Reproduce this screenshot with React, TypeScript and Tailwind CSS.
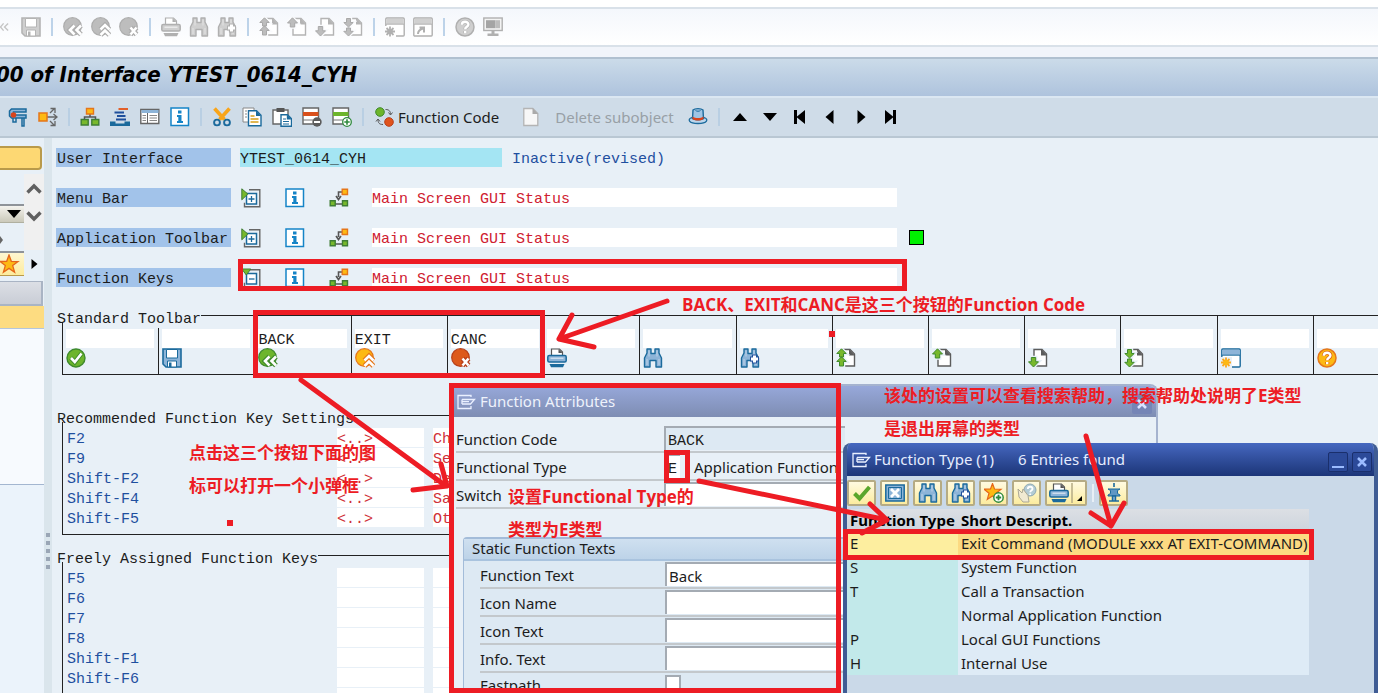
import type { ReactNode } from "react";

const ui = "font-['Noto_Sans','Noto_Sans_CJK_SC',sans-serif]";
const mono = "font-['Liberation_Mono','Noto_Sans_CJK_SC',monospace]";

type IconProps = { gray?: boolean; className?: string };

function Svg({ children, className = "" }: { children: ReactNode; className?: string }) {
  return (
    <svg viewBox="0 0 20 20" className={`size-5 shrink-0 ${className}`} fill="none" aria-hidden="true">
      {children}
    </svg>
  );
}

function SaveIcon({ gray }: IconProps) {
  const s = gray ? "#b4b4b4" : "#1b6a9c";
  const f = gray ? "#cfcfcf" : "#8db4d8";
  return (
    <Svg>
      <path d="M1 1h18v18H4l-3-3z" fill={f} stroke={s} strokeWidth="1.6" />
      <path d="M4.500 1.500h11v8.500h-11z" fill="#fff" stroke={s} />
      <path d="M5.500 13h9v6h-9z" fill="#fff" stroke={s} />
      <path d="M7 14.500h2.500V19H7z" fill={s} />
    </Svg>
  );
}

function RoundIcon({ gray, kind }: IconProps & { kind: "back" | "exit" | "cancel" }) {
  const colors = { back: ["#6db52c", "#3f8a2c"], exit: ["#fdb913", "#e5761a"], cancel: ["#dd5a1c", "#b8401a"] }[kind];
  const f = gray ? "#bdbdbd" : colors[0];
  const s = gray ? "#adadad" : colors[1];
  const d = {
    back: "M11.500 8.500 7 13l4.500 4.500M18 8.500 13.500 13l4.500 4.500",
    exit: "M9.500 12.500l4.500-4.500 4.500 4.500M9.500 18l4.500-4.500 4.500 4.500",
    cancel: "M11.500 10.500l6 7M17.500 10.500l-6 7",
  }[kind];
  return (
    <Svg>
      <circle cx="9.500" cy="9.500" r="8.800" fill={f} stroke={s} strokeWidth="1.200" />
      <path d={d} stroke={s} strokeWidth="5" />
      <path d={d} stroke="#fff" strokeWidth="2.600" />
    </Svg>
  );
}

function PrintIcon({ gray }: IconProps) {
  const s = gray ? "#b0b0b0" : "#1b6a9c";
  const f = gray ? "#cfcfcf" : "#8db4d8";
  return (
    <Svg>
      <path d="M4.500 8V1h8l3 3v4" fill="#fff" stroke={gray ? s : "#555"} strokeWidth="1.200" />
      <path d="M11.500 1v4h4z" fill={gray ? s : "#555"} />
      <rect x=".8" y="7.500" width="18.400" height="6.500" rx="1.500" fill={f} stroke={s} strokeWidth="1.500" />
      <path d="M3.500 10.200h13" stroke="#fff" strokeOpacity=".8" />
      <path d="M2.500 16h15l-1.500 3.200H4z" fill={s} />
    </Svg>
  );
}

function FindIcon({ gray, plus }: IconProps & { plus?: boolean }) {
  const s = gray ? "#b0b0b0" : "#1b6a9c";
  const f = gray ? "#cfcfcf" : "#8db4d8";
  return (
    <Svg>
      <path
        d="M4 1h4v4.500h4V1h4v4l2.500 5v9h-5.500v-6.500H7V19H1.500v-9L4 5z"
        fill={f}
        stroke={s}
        strokeWidth="1.400"
        strokeLinejoin="round"
      />
      <path d="M6 2.500v6M14 2.500v6M4 11v6M16 11v6" stroke="#fff" strokeOpacity=".45" />
      {plus && (
        <>
          <path d="M14.500 6.500v9M10 11h9" stroke={gray ? s : "#23509c"} strokeWidth="5.200" />
          <path d="M14.500 7.500v7M11 11h7" stroke="#fff" strokeWidth="3" />
        </>
      )}
    </Svg>
  );
}

function PageIcon({ gray, kind }: IconProps & { kind: "first" | "up" | "down" | "last" }) {
  const page = gray ? "#b4b4b4" : "#5c5c5c";
  const f = gray ? "#bdbdbd" : "#78b82c";
  const s = gray ? "#a9a9a9" : "#3f8a2c";
  const d = {
    first: "M5.500.8l4.700 4.700H7.500V9h-4V5.500H.8zM5.500 8.800l4.700 4.700H7.500V18h-4v-4.500H.8z",
    up: "M5.500.8l5 5.200H7.700v4H3.300V6H.5z",
    down: "M5.500 19l5-5.200H7.700V9.500H3.300v4.300H.5z",
    last: "M5.500 10l4.700-4.500H7.500V1.500h-4v4H.8zM5.500 19l4.700-4.700H7.500V11h-4v3.300H.8z",
  }[kind];
  return (
    <Svg>
      <path d="M6 1.500h8l4.500 4.500v12H6z" fill="#fff" stroke={page} strokeWidth="1.400" />
      <path d="M13 1v6.500h6z" fill={page} />
      <path d={d} stroke={gray ? "#fafbfd" : "#e8f0f7"} strokeWidth="3.400" />
      <path d={d} fill={f} stroke={s} />
    </Svg>
  );
}

function WindowIcon({ gray, shortcut }: IconProps & { shortcut?: boolean }) {
  const s = gray ? "#b0b0b0" : "#1b6a9c";
  return (
    <Svg>
      <rect x=".8" y="1" width="18.400" height="18" rx="1" fill="#fff" stroke={s} strokeWidth="1.400" />
      <path d="M1.500 1.700h17V7h-17z" fill={gray ? "#d0d0d0" : "#8db4d8"} />
      <path d="M1 7.200h18" stroke={s} />
      {shortcut ? (
        <path d="M5 17c0-3 1.500-4.500 5-5.500M6.500 10.500h4.500v5" stroke={s} strokeWidth="2" />
      ) : (
        <>
          <path d="M0 9h11v11H0z" fill={gray ? "#fff" : "#e8f0f7"} />
          <path
            d="M5 9.500v10M0 14.500h10M1.500 11l7 7M8.500 11l-7 7"
            stroke={gray ? "#b0b0b0" : "#fba81a"}
            strokeWidth="1.800"
          />
          <circle cx="5" cy="14.500" r="2.600" fill={gray ? "#b0b0b0" : "#fdb913"} />
        </>
      )}
    </Svg>
  );
}

function HelpIcon({ gray }: IconProps) {
  return (
    <Svg>
      <circle cx="10" cy="10" r="9" fill={gray ? "#cfcfcf" : "#fdb913"} stroke={gray ? "#b0b0b0" : "#e5761a"} strokeWidth="1.500" />
      <path
        d="M6.800 7.800c0-4 6.600-4 6.600-.3 0 2.300-3.200 2.300-3.200 4.700M10.200 14v2.300"
        stroke={gray ? "#b8b8b8" : "#d9661a"}
        strokeWidth="4"
      />
      <path d="M6.800 7.800c0-4 6.600-4 6.600-.3 0 2.300-3.200 2.300-3.200 4.700M10.200 14v2.300" stroke="#fff" strokeWidth="2.400" />
    </Svg>
  );
}

function MonitorIcon() {
  return (
    <Svg>
      <rect x=".8" y="1" width="18.400" height="12.500" fill="#f3f3f3" stroke="#b0b0b0" strokeWidth="1.400" />
      <path d="M3 3.200h9.500v8H3z" fill="#a4a4a4" />
      <path d="M12.500 3.200H17v8h-4.500z" fill="#bcbcbc" />
      <path d="M8.500 14h3v2.500h4V19h-11v-2.500h4z" fill="#b0b0b0" />
    </Svg>
  );
}

function CheckIcon() {
  return (
    <Svg>
      <circle cx="10" cy="10" r="9" fill="#6db52c" stroke="#3f8a2c" strokeWidth="1.400" />
      <path d="M4.800 10l4 4.200L15.500 5.500" stroke="#3f8a2c" strokeWidth="4.400" />
      <path d="M5 10l3.800 4L15.500 5.500" stroke="#fff" strokeWidth="2.600" />
    </Svg>
  );
}

function InfoIcon() {
  return (
    <Svg>
      <rect x="1" y="1" width="17.500" height="17.500" fill="#fff" stroke="#1584c7" strokeWidth="1.500" />
      <path d="M8 3.500h3.500v3H8zM7 8h4.500v6H13v2H7v-2h1.300v-4H7z" fill="#1584c7" />
    </Svg>
  );
}

function StatusFlowIcon() {
  return (
    <Svg>
      <path d="M13 4H9.500v5M7 8l2.500 3.500L12 8M6 16h8" stroke="#555" strokeWidth="1.600" />
      <path d="M13.200 1.200h5.300v5.300h-5.300z" fill="#fdb913" stroke="#e5761a" strokeWidth="1.400" />
      <path d="M1.200 12.700h5v5h-5zM13.500 12.700h5v5h-5z" fill="#78b82c" stroke="#3f7d35" strokeWidth="1.400" />
    </Svg>
  );
}

function ExpandIcon({ open }: { open?: boolean }) {
  return (
    <Svg>
      <path d="M8 1.700h10.800v17H3.500v-4" stroke="#666" strokeWidth="1.400" />
      <path d="M5.500 5.500h10v10.500h-10z" fill="#fff" stroke="#1b6a9c" strokeWidth="1.500" />
      <path d={open ? "M8 11h5.500" : "M7.500 11h6M10.500 8v6"} stroke="#1b6a9c" strokeWidth="1.300" />
      <path d={open ? "M.8 1h9l-4.500 6z" : "M.8.800v11L6.800 6z"} fill="#78b82c" stroke="#3f7d35" />
    </Svg>
  );
}

function StarIcon() {
  return (
    <Svg>
      <path d="M9 1l2.300 6.300 6.700.2-5.300 4.100 1.900 6.600L9 14.400l-5.600 3.800 1.900-6.600L0 7.500l6.700-.2z" fill="#fdb913" stroke="#e5661a" strokeWidth="1.300" />
    </Svg>
  );
}

function TriangleIcon({ d }: { d: string }) {
  return (
    <Svg>
      <path d={d} fill="#000" />
    </Svg>
  );
}

function WindowMark() {
  return (
    <svg viewBox="0 0 20 16" className="h-4 w-5 shrink-0" fill="none" stroke="#eaf0ff" strokeWidth="1.300" aria-hidden="true">
      <path d="M15 3V1.500H2v13h13V12" />
      <path d="M6 5.500h12.500L14.500 10H6M6 7.700h7" />
      <path d="M6 5.500V10" />
    </svg>
  );
}

function IconButton({ label, children, className = "" }: { label: string; children: ReactNode; className?: string }) {
  return (
    <button type="button" aria-label={label} className={`flex shrink-0 items-center justify-center ${className}`}>
      {children}
    </button>
  );
}

function MenuToolbar() {
  const groups: [string, ReactNode][][] = [
    [["Save", <SaveIcon gray />]],
    [
      ["Back", <RoundIcon gray kind="back" />],
      ["Exit", <RoundIcon gray kind="exit" />],
      ["Cancel", <RoundIcon gray kind="cancel" />],
    ],
    [
      ["Print", <PrintIcon gray />],
      ["Find", <FindIcon gray />],
      ["Find next", <FindIcon gray plus />],
    ],
    [
      ["First page", <PageIcon gray kind="first" />],
      ["Previous page", <PageIcon gray kind="up" />],
      ["Next page", <PageIcon gray kind="down" />],
      ["Last page", <PageIcon gray kind="last" />],
    ],
    [
      ["New session", <WindowIcon gray />],
      ["Create shortcut", <WindowIcon gray shortcut />],
    ],
    [
      ["Help", <HelpIcon gray />],
      ["Customize layout", <MonitorIcon />],
    ],
  ];
  return (
    <div className="mt-[7px] flex h-10 shrink-0 items-center border-y-2 border-[#d9e1e9] bg-linear-to-b from-[#f4f7fc] to-white">
      <svg viewBox="0 0 10 12" className="mr-3 h-3 w-[9px]" fill="none" stroke="#c4c4c4" strokeWidth="1.500" aria-hidden="true">
        <path d="M4 2 .5 6 4 10M9 2 5 6l4 4" />
      </svg>
      {groups.map((group, i) => (
        <div key={i} className="flex items-center">
          {i > 0 && <span className="mx-[10px] h-[18px] w-[2px] bg-[#bdd3e9]" />}
          <div className="flex gap-2">
            {group.map(([label, icon]) => (
              <IconButton key={label} label={label}>
                {icon}
              </IconButton>
            ))}
          </div>
        </div>
      ))}
    </div>
  );
}

function ToolSep() {
  return <span className="h-[18px] w-[2px] shrink-0 bg-[#b9cfe3]" />;
}

function AppToolbar() {
  return (
    <div className={`flex h-[42px] shrink-0 items-center gap-[10px] border-t-2 border-b-2 border-t-[#dbe7f2] border-b-[#b9c7d3] bg-[#cfdce8] pl-2 text-[15px] ${ui}`}>
      <IconButton label="Display or change">
        <Svg>
          <path d="M3.500 2H18v3H5.500v3H18v3H3.500L1.500 9V4z" fill="#8db4d8" stroke="#1b6a9c" strokeWidth="1.500" />
          <path d="M5 11v4h3v-4M14 11v8h2v-8" stroke="#1b6a9c" strokeWidth="1.500" />
          <circle cx="5.500" cy="8" r="2.800" fill="#d8431c" />
        </Svg>
      </IconButton>
      <IconButton label="Other object">
        <Svg>
          <path d="M8 10h10M12 6l4-4M12 14l4 4M15.500 7l3.500 3-3.500 3M12.500 1.500H17V6M12.500 18.500H17V14" stroke="#666" strokeWidth="1.300" />
          <path d="M1 6h8v8H1z" fill="#fdb913" stroke="#e5761a" strokeWidth="1.500" />
        </Svg>
      </IconButton>
      <ToolSep />
      <IconButton label="Hierarchy">
        <Svg>
          <path d="M10 7v3M4.500 13v-3h11v3" stroke="#555" strokeWidth="1.500" />
          <path d="M6.500 1.500h7V7h-7z" fill="#fdb913" stroke="#e5761a" strokeWidth="1.400" />
          <path d="M1.200 12.500h7v5.500h-7zM11.800 12.500h7v5.500h-7z" fill="#78b82c" stroke="#3f7d35" strokeWidth="1.400" />
        </Svg>
      </IconButton>
      <IconButton label="Object list">
        <Svg>
          <path d="M8.500 2h9.500" stroke="#e2602a" strokeWidth="2" />
          <path d="M4.500 5.500h9.500M7 9h8.500M6 12.500h10" stroke="#1f4f9c" strokeWidth="2" />
          <path d="M0 14.500h5.500v2h9v-2H20V19H0z" fill="#1b6a9c" />
        </Svg>
      </IconButton>
      <IconButton label="Detail">
        <Svg>
          <path d="M.8 2.500h18v14H.8z" fill="#fff" stroke="#666" strokeWidth="1.400" />
          <path d="M1.500 3h17v3h-17z" fill="#8db4d8" />
          <path d="M7.500 6v10" stroke="#666" />
          <path d="M2.500 8.500h3.500M2.500 11h3.500M2.500 13.500h3.500M9.500 8.500H17M9.500 11H17M9.500 13.500H17" stroke="#888" strokeWidth="1.200" />
        </Svg>
      </IconButton>
      <IconButton label="Information">
        <InfoIcon />
      </IconButton>
      <ToolSep />
      <IconButton label="Cut">
        <Svg>
          <path d="M2.500 1.500l10 11M17.500 1.500l-10 11" stroke="#f9a51a" strokeWidth="3.600" />
          <circle cx="5" cy="15.500" r="2.900" stroke="#1b6a9c" strokeWidth="1.900" />
          <circle cx="15" cy="15.500" r="2.900" stroke="#1b6a9c" strokeWidth="1.900" />
        </Svg>
      </IconButton>
      <IconButton label="Copy">
        <Svg>
          <path d="M1 1h11v14H1z" fill="#fff" stroke="#888" />
          <path d="M3 4h2M3 7h2M3 10h2" stroke="#888" />
          <path d="M6.500 3.800h8l4.500 4.500v10.500H6.500z" fill="#fff" stroke="#1b6a9c" strokeWidth="1.400" />
          <path d="M14 3.500V9h5" fill="#1b6a9c" />
          <path d="M8.500 9h4M8.500 12h8M8.500 15h8" stroke="#d8a01a" strokeWidth="1.300" />
        </Svg>
      </IconButton>
      <IconButton label="Paste">
        <Svg>
          <path d="M1 3h15v14H1z" fill="#fff" stroke="#666" strokeWidth="1.400" />
          <path d="M4.500 1h8v4h-8z" fill="#555" />
          <path d="M9 7.800h6.500l4 4v7.500H9z" fill="#fff" stroke="#1b6a9c" strokeWidth="1.400" />
          <path d="M14.800 7.500v5h5" fill="#1b6a9c" />
          <path d="M11 12h3M11 14.500h6M11 17h6" stroke="#1b6a9c" />
        </Svg>
      </IconButton>
      <IconButton label="Delete line">
        <Svg>
          <path d="M1 1h15.500v16H1z" fill="#fff" stroke="#666" strokeWidth="1.400" />
          <path d="M1 5h15.500v4H1z" fill="#d9501c" />
          <path d="M1 13h10" stroke="#777" />
          <circle cx="15" cy="15" r="4.700" fill="#5c5c5c" />
          <path d="M12 15h6" stroke="#fff" strokeWidth="2" />
        </Svg>
      </IconButton>
      <IconButton label="Insert line">
        <Svg>
          <path d="M1 1h15.500v16H1z" fill="#fff" stroke="#666" strokeWidth="1.400" />
          <path d="M1 5h15.500v4H1z" fill="#6db52c" />
          <path d="M1 13h10" stroke="#777" />
          <circle cx="15" cy="15" r="4.300" fill="#fff" stroke="#2f8a3c" strokeWidth="1.300" />
          <path d="M12.300 15h5.400M15 12.300v5.400" stroke="#2f8a3c" strokeWidth="1.600" />
        </Svg>
      </IconButton>
      <ToolSep />
      <button type="button" className="flex shrink-0 items-center gap-1 text-[#1c1c1c]">
        <Svg>
          <circle cx="6" cy="5" r="4.300" fill="#6db52c" stroke="#3f8a2c" />
          <circle cx="15" cy="15" r="4.300" fill="#e0531c" stroke="#b8401a" />
          <path d="M11.500 2.500c4 0 5 2 5 5M14.500 5.500l2 2.500 2-2.500M9 17.500c-4 0-5-2-5-5M2 14.500l2-2.500 2 2.500" stroke="#555" />
        </Svg>
        Function Code
      </button>
      <button type="button" className="ml-3 flex shrink-0 items-center gap-[14px] text-[#98a0a6]">
        <Svg>
          <path d="M2.800 1.500h9l5 5v12h-14z" fill="#f7f7f7" stroke="#b4b4b4" strokeWidth="1.300" />
          <path d="M11.500 1v6H17z" fill="#aaa" />
        </Svg>
        Delete subobject
      </button>
      <IconButton label="Activate" className="ml-1">
        <Svg>
          <path d="M4.500 12 5 3c2-1.800 8-1.800 10 0l.5 9" fill="#9fc4e4" stroke="#1b6a9c" strokeWidth="1.400" />
          <path d="M4 10.500c-5 1.500-3.500 6 6 6s11-4.500 6-6c.5 3-12.500 3-12 0z" fill="#bcd6ec" stroke="#1b6a9c" strokeWidth="1.300" />
          <path d="M4.500 9.500c3 2 8 2 11 0v2.500c-3 2-8 2-11 0z" fill="#d9431c" />
          <path d="M7.500 3.500c1.500 1 3.500 1 5 0" stroke="#1b6a9c" />
        </Svg>
      </IconButton>
      <ToolSep />
      <IconButton label="Collapse">
        <TriangleIcon d="M10 6l7 8H3z" />
      </IconButton>
      <IconButton label="Expand">
        <TriangleIcon d="M10 14l7-8H3z" />
      </IconButton>
      <IconButton label="First">
        <TriangleIcon d="M4 3h3v6.500L15 3v14l-8-6.500V17H4z" />
      </IconButton>
      <IconButton label="Previous">
        <TriangleIcon d="M13.500 3v14L5.500 10z" />
      </IconButton>
      <IconButton label="Next">
        <TriangleIcon d="M7.500 3v14l8-7z" />
      </IconButton>
      <IconButton label="Last">
        <TriangleIcon d="M16 3h-3v6.500L5 3v14l8-6.500V17h3z" />
      </IconButton>
    </div>
  );
}

function Sidebar() {
  return (
    <aside className="flex w-11 shrink-0 flex-col overflow-hidden bg-[#e8f0f7]">
      <button type="button" aria-label="Repository" className="mt-2 mr-[2px] h-6 shrink-0 rounded-r-sm border-2 border-l-0 border-[#b99a4a] bg-[#fdd873]" />
      <div className="mt-1 flex h-[76px] shrink-0">
        <div className="flex w-6 flex-col items-start pt-[30px]">
          <button type="button" aria-label="Open list" className="flex h-[19px] w-6 items-center justify-center border-t-2 border-b border-t-[#8e9399] border-b-[#b0b0a0] bg-linear-to-b from-[#f4f3ee] to-[#cbc9ba]">
            <Svg>
              <path d="M5 6h14l-7 8z" fill="#000" />
            </Svg>
          </button>
          <svg viewBox="0 0 4 8" className="mt-[13px] h-2 w-1" fill="#666" aria-hidden="true">
            <path d="M0 0l3 4-3 4z" />
          </svg>
        </div>
        <div className="flex w-5 flex-col items-center gap-2 bg-[#f0f0f0] pt-[5px]">
          <IconButton label="Scroll up">
            <Svg>
              <path d="M3.500 13.500 10 7l6.500 6.500" stroke="#606060" strokeWidth="3.400" />
            </Svg>
          </IconButton>
          <IconButton label="Scroll down">
            <Svg>
              <path d="M3.500 5.500 10 12l6.500-6.500" stroke="#606060" strokeWidth="3.400" />
            </Svg>
          </IconButton>
        </div>
      </div>
      <div className="mt-px flex h-[25px] shrink-0 items-center">
        <button type="button" aria-label="Favorites" className="flex h-[25px] w-[25px] items-center border-t-2 border-b border-t-[#8e9399] border-b-[#b99a4a] bg-linear-to-b from-[#fff6d0] to-[#fdeb9c]">
          <StarIcon />
        </button>
        <Svg>
          <path d="M7.500 5l6 5-6 5z" fill="#000" />
        </Svg>
      </div>
      <div className="mt-[5px] mr-[1px] h-[25px] shrink-0 border-t border-r-2 border-b-2 border-[#a9b4c4] bg-linear-to-b from-[#dcdfe5] to-[#c9cdd6]" />
      <div className="h-[23px] shrink-0 border-b border-[#b4c6dc] bg-[#fddc81]" />
      <div className="h-[156px] shrink-0 border-b border-[#a3b6d0] bg-[#f7fafe]" />
      <div className="flex-1 bg-[#ebf3fb]" />
    </aside>
  );
}

function Splitter() {
  return (
    <div className="flex w-[8px] shrink-0 flex-col items-center gap-1 bg-[#dae5ec] pt-[395px]">
      {[0, 1, 2, 3, 4].map((i) => (
        <span key={i} className="h-[4px] w-[4px] shrink-0 bg-[#9aa6b6]" />
      ))}
    </div>
  );
}

const line = "h-[19px] leading-6";
const cell = "h-[19px] bg-white pt-1 leading-4 outline-none";

function StatusRow({ label, open, mark }: { label: string; open?: boolean; mark?: boolean }) {
  const id = label.toLowerCase().replace(" ", "-");
  return (
    <div className="flex h-10 items-start">
      <label htmlFor={id} className={`${line} w-[175px] bg-[#a2c3ea] pl-px`}>
        {label}
      </label>
      <div className="flex w-[141px] gap-6 pl-[10px]">
        <IconButton label={`Toggle ${label}`}>
          <ExpandIcon open={open} />
        </IconButton>
        <IconButton label={`${label} info`}>
          <InfoIcon />
        </IconButton>
        <IconButton label={`${label} status`}>
          <StatusFlowIcon />
        </IconButton>
      </div>
      <input id={id} defaultValue="Main Screen GUI Status" className={`${cell} w-[525px] text-[#cf2030]`} />
      {mark && <span className="mt-[2px] ml-3 size-[15px] border border-black bg-[#00f000]" />}
    </div>
  );
}

const cells: [string, string, ReactNode][] = [
  ["Enter", "", <CheckIcon />],
  ["Save", "", <SaveIcon />],
  ["Back", "BACK", <RoundIcon kind="back" />],
  ["Exit", "EXIT", <RoundIcon kind="exit" />],
  ["Cancel", "CANC", <RoundIcon kind="cancel" />],
  ["Print", "", <PrintIcon />],
  ["Find", "", <FindIcon />],
  ["Find next", "", <FindIcon plus />],
  ["First page", "", <PageIcon kind="first" />],
  ["Previous page", "", <PageIcon kind="up" />],
  ["Next page", "", <PageIcon kind="down" />],
  ["Last page", "", <PageIcon kind="last" />],
  ["New session", "", <WindowIcon />],
  ["Help", "", <HelpIcon />],
];

function StandardToolbar() {
  return (
    <fieldset className="-mr-10 ml-[6px] h-[67px] min-w-0 border border-[#222]">
      <legend className="-ml-[6px] h-[14px] leading-6">Standard Toolbar</legend>
      <div className="-mt-[6px] grid h-[58px] w-[1347px] grid-cols-14">
        {cells.map(([name, value, icon], i) => (
          <div key={name} className={`flex min-w-0 flex-col justify-end border-r border-[#222] pr-1 pb-[6px] pl-[3px] ${i === 0 ? "mt-3" : ""}`}>
            <input aria-label={`${name} function code`} defaultValue={value} className={`${cell} w-full`} />
            <IconButton label={name} className="self-start">
              {icon}
            </IconButton>
          </div>
        ))}
      </div>
    </fieldset>
  );
}

function KeyTable({ title, rows }: { title: string; rows: [string, string, string][] }) {
  return (
    <fieldset className="ml-[6px] w-[700px] min-w-0 border border-[#222] pb-[6px]">
      <legend className="-ml-[6px] h-[14px] leading-6">{title}</legend>
      <div className="pt-[6px]">
        {rows.map(([key, code, text]) => (
          <div key={key} className="flex h-5 items-start">
            <span className={`${line} w-[274px] pl-1 text-[#1f4f9f]`}>{key}</span>
            <input aria-label={`${key} code`} defaultValue={code} className={`${cell} w-[87px] text-[#cf3038]`} />
            <input aria-label={`${key} text`} defaultValue={text} className={`${cell} ml-[9px] w-[300px] text-[#cf3038]`} />
          </div>
        ))}
      </div>
    </fieldset>
  );
}

function Editor() {
  return (
    <main className={`min-w-0 flex-1 overflow-hidden bg-[#e8f0f7] pt-[10px] pr-4 pl-1 text-[15px] text-[#1c1c1c] ${mono}`}>
      <div className="flex h-10 items-start">
        <span className={`${line} w-[175px] bg-[#a2c3ea] pl-px`}>User Interface</span>
        <span className={`${line} ml-[9px] w-[262px] bg-[#a4e5f3]`}>YTEST_0614_CYH</span>
        <span className={`${line} ml-[10px] text-[#1f4f9f]`}>Inactive(revised)</span>
      </div>
      <StatusRow label="Menu Bar" />
      <StatusRow label="Application Toolbar" mark />
      <StatusRow label="Function Keys" open />
      <StandardToolbar />
      <div className="mt-[33px]">
        <KeyTable
          title="Recommended Function Key Settings"
          rows={[
            ["F2", "<..>", "Ch"],
            ["F9", "<..>", "Se"],
            ["Shift-F2", "<..>", "De"],
            ["Shift-F4", "<..>", "Sa"],
            ["Shift-F5", "<..>", "Ot"],
          ]}
        />
      </div>
      <div className="mt-[13px]">
        <KeyTable
          title="Freely Assigned Function Keys"
          rows={[
            ["F5", "", ""],
            ["F6", "", ""],
            ["F7", "", ""],
            ["F8", "", ""],
            ["Shift-F1", "", ""],
            ["Shift-F6", "", ""],
            ["", "", ""],
          ]}
        />
      </div>
    </main>
  );
}

const sunken = "border-t-2 border-l-2 border-[#a4abb3] outline-none";

function AttributeRow({ id, label, children }: { id: string; label: string; children: ReactNode }) {
  return (
    <div className="flex h-7 items-center border-b-2 border-[#c3c8cc]">
      <label htmlFor={id} className="flex-1 pt-[2px]">
        {label}
      </label>
      {children}
    </div>
  );
}

function AttributesDialog() {
  const field = `h-6 w-[180px] bg-white pt-[2px] pl-[2px] ${sunken}`;
  return (
    <section aria-label="Function Attributes" className={`absolute top-[384px] left-[452px] flex h-[309px] w-[706px] flex-col overflow-hidden rounded-t-lg border-t-2 border-r-2 border-[#a5b3cf] bg-[#e8f0f7] text-[15px] text-[#1c1c1c] ${ui}`}>
      <header className="flex h-[31px] shrink-0 items-center gap-1 bg-linear-to-b from-[#97a8da] to-[#7e8db3] px-1 text-[#eef2fb]">
        <WindowMark />
        <h2 className="flex-1">Function Attributes</h2>
        <button type="button" aria-label="Close attributes" className="mt-1 flex size-5 items-center justify-center rounded-xs bg-[#7585b6] text-[#dbe4ff]">
          <svg viewBox="0 0 10 10" className="size-[10px]" stroke="currentColor" strokeWidth="2.500" aria-hidden="true">
            <path d="M1 1l8 8M9 1l-8 8" />
          </svg>
        </button>
      </header>
      <div className="w-[393px] pt-2 pl-1">
        <AttributeRow id="function-code" label="Function Code">
          <input id="function-code" defaultValue="BACK" className={`h-6 w-[181px] bg-[#dde9f3] pt-1 pl-[2px] ${sunken} ${mono}`} />
        </AttributeRow>
        <AttributeRow id="functional-type" label="Functional Type">
          <input id="functional-type" defaultValue="E" className={`h-6 w-4 bg-white pt-1 pl-[2px] ${sunken} ${mono}`} />
          <span className="w-[165px] pt-[2px] pl-[14px] whitespace-nowrap">Application Function</span>
        </AttributeRow>
        <AttributeRow id="switch" label="Switch">
          <input id="switch" className={`h-6 w-[181px] bg-white ${sunken}`} />
        </AttributeRow>
      </div>
      <div className="mt-[28px] ml-[11px] flex-1 rounded-tl-sm border-t-2 border-l border-[#a3bcd9] bg-[#dde9f3]">
        <h3 className="h-[22px] border-b-2 border-[#a9c3de] bg-linear-to-b from-[#cfe0f0] to-[#bdd3e8] pl-2 leading-[18px]">Static Function Texts</h3>
        <div className="ml-4 w-[365px]">
          {[
            ["Function Text", "Back"],
            ["Icon Name", ""],
            ["Icon Text", ""],
            ["Info. Text", ""],
          ].map(([label, value]) => (
            <AttributeRow key={label} id={label.replace(" ", "-")} label={label}>
              <input id={label.replace(" ", "-")} defaultValue={value} className={field} />
            </AttributeRow>
          ))}
          <div className="flex items-center pt-px">
            <label htmlFor="fastpath" className="w-[185px]">
              Fastpath
            </label>
            <input id="fastpath" className={`h-5 w-4 border-r-2 bg-white ${sunken}`} />
          </div>
        </div>
      </div>
    </section>
  );
}

function YellowButton({ label, children, className = "w-[29px]" }: { label: string; children: ReactNode; className?: string }) {
  return (
    <button type="button" aria-label={label} className={`flex h-[26px] items-center justify-center rounded-xs border-2 border-[#b5ab84] bg-linear-to-b from-[#fffae0] to-[#fcec9f] ${className}`}>
      {children}
    </button>
  );
}

const entries: [string, string][] = [
  ["E", "Exit Command (MODULE xxx AT EXIT-COMMAND)"],
  ["S", "System Function"],
  ["T", "Call a Transaction"],
  ["", "Normal Application Function"],
  ["P", "Local GUI Functions"],
  ["H", "Internal Use"],
];

function TypeDialog() {
  return (
    <section aria-label="Function Type" className={`absolute top-[443px] left-[843px] h-[250px] w-[535px] overflow-hidden rounded-t-lg border-x-4 border-[#3f5c94] bg-[#cad9e8] text-[15px] text-[#1c1c1c] ${ui}`}>
      <header className="-mx-1 flex h-[33px] items-center bg-linear-to-b from-[#4668c0] to-[#1c3578] pr-[6px] pl-2 text-[#e6edff]">
        <WindowMark />
        <h2 className="ml-[3px]">Function Type (1)</h2>
        <span className="ml-6 flex-1">6 Entries found</span>
        <button type="button" aria-label="Minimize" className="mt-1 mr-1 flex size-5 items-end justify-center rounded-xs border border-[#1a2f6c] bg-[#2c4a99] pb-[3px]">
          <span className="h-[2px] w-3 bg-[#9cbcff]" />
        </button>
        <button type="button" aria-label="Close list" className="mt-1 flex size-5 items-center justify-center rounded-xs border border-[#1a2f6c] bg-[#2c4a99] text-[#9cbcff]">
          <svg viewBox="0 0 10 10" className="size-[10px]" stroke="currentColor" strokeWidth="2.500" aria-hidden="true">
            <path d="M1 1l8 8M9 1l-8 8" />
          </svg>
        </button>
      </header>
      <div className="flex h-[33px] items-center gap-[4px] pt-px">
        <YellowButton label="Accept">
          <Svg>
            <path d="M2.500 10.500l5 5L17.500 4" stroke="#5aa62c" strokeWidth="4" />
          </Svg>
        </YellowButton>
        <YellowButton label="Cancel list">
          <Svg>
            <path d="M.8 2h18.400v16H.8z" fill="#8db4d8" stroke="#1b6a9c" strokeWidth="1.500" />
            <path d="M3.500 4.500h13v11h-13z" stroke="#1b6a9c" />
            <path d="M6 6l8 8M14 6l-8 8" stroke="#fff" strokeWidth="2.800" />
          </Svg>
        </YellowButton>
        <YellowButton label="Search">
          <FindIcon />
        </YellowButton>
        <YellowButton label="Search next">
          <FindIcon plus />
        </YellowButton>
        <YellowButton label="Add to favorites">
          <Svg>
            <path d="M8.500.5l2 5.500 6.500.2-5 4 1.700 6.200-5.200-3.500-5.200 3.500L5 10.200 0 6.200 6.500 6z" fill="#fdb913" stroke="#e5661a" strokeWidth="1.200" />
            <circle cx="14.500" cy="14.500" r="4.700" fill="#fff" stroke="#2f8a3c" strokeWidth="1.500" />
            <path d="M11.800 14.500h5.400M14.500 11.800v5.400" stroke="#2f8a3c" strokeWidth="1.800" />
          </Svg>
        </YellowButton>
        <YellowButton label="Field help">
          <Svg>
            <circle cx="13" cy="7" r="6" fill="#b3cbd4" stroke="#8fa9b4" />
            <path d="M10.800 6c0-3 4.700-3 4.700 0 0 1.500-2.300 1.600-2.300 3.200M13.200 10.500V12" stroke="#fff" strokeWidth="1.800" />
            <path d="M1 6l4 4 1-4 5 6.500 1 6.500H6l-4-5z" fill="#f1ead2" stroke="#aaa795" />
          </Svg>
        </YellowButton>
        <YellowButton label="Print list" className="w-[42px]">
          <PrintIcon />
          <svg viewBox="0 0 14 20" className="ml-px h-5 w-[14px]" aria-hidden="true">
            <path d="M2 0v20" stroke="#b5ab84" strokeWidth="1.500" />
            <path d="M12 13v5H7z" fill="#000" />
          </svg>
        </YellowButton>
        <span className="mx-px h-[18px] w-[2px] bg-[#e8eff6]" />
        <YellowButton label="Hold list">
          <Svg>
            <path d="M10 0v4M10 13v3" stroke="#1b6a9c" strokeWidth="1.600" />
            <path d="M4 6h12l-2.500 1.500v3L16 12v1H4v-1l2.500-1.500v-3z" fill="#5f97c4" stroke="#1b6a9c" />
            <path d="M5 18h10M8.500 13h3v5h-3z" fill="#8db4d8" stroke="#1b6a9c" strokeWidth="1.500" />
          </Svg>
        </YellowButton>
      </div>
      <table className="w-[462px] table-fixed border-collapse text-left">
        <thead>
          <tr className="h-[22px] bg-linear-to-b from-[#dcdfe4] to-[#cdd4dd] text-black">
            <th scope="col" className="w-[111px] p-0 pl-[3px] leading-[22px] whitespace-nowrap">
              Function Type
            </th>
            <th scope="col" className="p-0 pl-[3px] leading-[22px]">
              Short Descript.
            </th>
          </tr>
        </thead>
        <tbody>
          {entries.map(([key, text], i) => (
            <tr key={text} className="h-6 leading-6">
              <td className={`p-0 pl-[3px] ${i === 0 ? "bg-[#fdee9f]" : "bg-[#c2e9ea]"}`}>{key}</td>
              <td className={`p-0 pl-[3px] whitespace-nowrap ${i === 0 ? "bg-[#fcda82]" : "bg-[#deebf6]"}`}>{text}</td>
            </tr>
          ))}
        </tbody>
      </table>
    </section>
  );
}

function Note({ lines, place }: { lines: string[]; place: string }) {
  return (
    <p className={`absolute flex flex-col gap-[13px] leading-5 font-bold whitespace-nowrap ${place}`}>
      {lines.map((text) => (
        <span key={text}>{text}</span>
      ))}
    </p>
  );
}

function Annotations() {
  return (
    <div className="pointer-events-none absolute inset-0 font-['Open_Sans','Noto_Sans_CJK_SC',sans-serif] text-[17px] text-[#ed1c24]">
      <svg className="absolute inset-0 size-full overflow-visible" fill="none" stroke="#ed1c24" strokeWidth="5" aria-hidden="true">
        <rect x="240.500" y="261.500" width="664" height="27" />
        <rect x="255.500" y="312.500" width="287" height="63" />
        <rect x="451.500" y="385.500" width="387" height="305" />
        <rect x="666.500" y="452.500" width="21" height="28" />
        <rect x="845.500" y="531.500" width="466" height="26" />
        <g strokeLinecap="round" strokeLinejoin="round">
          <path d="M667 301L559 339M572 315L559 339L594 347" />
          <path d="M301 380L446 486M441 464L447 486L413 490" />
          <path d="M699 481L887 520M870 504L887 520L862 533" />
          <path d="M1086 436L1111 526M1091 513L1111 526L1124 503" />
        </g>
        <path d="M829 334h6M227 523h6" strokeWidth="6" />
      </svg>
      <Note place="top-[295px] left-[682px]" lines={["BACK、EXIT和CANC是这三个按钮的Function Code"]} />
      <Note place="top-[443px] left-[189px]" lines={["点击这三个按钮下面的图", "标可以打开一个小弹框"]} />
      <Note place="top-[386px] left-[884px]" lines={["该处的设置可以查看搜索帮助，搜索帮助处说明了E类型", "是退出屏幕的类型"]} />
      <Note place="top-[487px] left-[508px]" lines={["设置Functional Type的", "类型为E类型"]} />
    </div>
  );
}

export default function App() {
  return (
    <div className="relative flex h-screen flex-col overflow-hidden bg-white">
      <MenuToolbar />
      <div className="h-[10px] shrink-0 bg-[#f1f4fa]" />
      <h1 className="h-[39px] shrink-0 border-t-2 border-[#b0c0d0] bg-linear-to-b from-[#cbdbe9] to-[#aec3dd] -indent-1 font-['DejaVu_Sans_Condensed','DejaVu_Sans',sans-serif] text-[22px] leading-8 font-bold whitespace-nowrap text-black italic">
        00 of Interface YTEST_0614_CYH
      </h1>
      <AppToolbar />
      <div className="flex min-h-0 flex-1">
        <Sidebar />
        <Splitter />
        <Editor />
      </div>
      <AttributesDialog />
      <TypeDialog />
      <Annotations />
    </div>
  );
}
